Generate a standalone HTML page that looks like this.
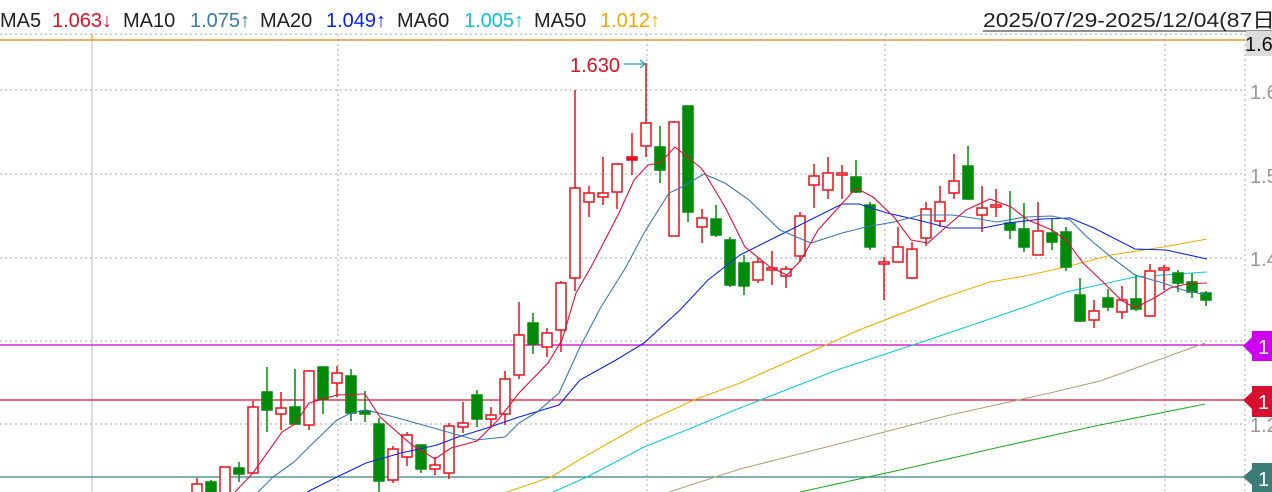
<!DOCTYPE html>
<html><head><meta charset="utf-8"><style>
html,body{margin:0;padding:0;background:#fff;width:1272px;height:492px;overflow:hidden}
svg{display:block;font-family:"Liberation Sans","Noto Sans CJK SC",sans-serif}
</style></head><body>
<svg width="1272" height="492" viewBox="0 0 1272 492" xmlns="http://www.w3.org/2000/svg">
<g font-size="20">
<text x="0" y="27" fill="#222">MA5</text><text x="52" y="27" fill="#e0102a">1.063↓</text>
<text x="123" y="27" fill="#222">MA10</text><text x="190" y="27" fill="#3a78b0">1.075↑</text>
<text x="260" y="27" fill="#222">MA20</text><text x="326" y="27" fill="#0a22ee">1.049↑</text>
<text x="397" y="27" fill="#222">MA60</text><text x="464" y="27" fill="#10c0d8">1.005↑</text>
<text x="534" y="27" fill="#222">MA50</text><text x="600" y="27" fill="#f0a800">1.012↑</text>
<text x="983" y="27" fill="#222" textLength="292" lengthAdjust="spacingAndGlyphs">2025/07/29-2025/12/04(87日</text>
</g>
<line x1="983" y1="31" x2="1272" y2="31" stroke="#222" stroke-width="1"/>
<g stroke="#aaa" stroke-width="1" stroke-dasharray="2,3">
<line x1="0" y1="34" x2="1245" y2="34"/>
<line x1="0" y1="90" x2="1245" y2="90"/><line x1="0" y1="174" x2="1245" y2="174"/>
<line x1="0" y1="258" x2="1245" y2="258"/><line x1="0" y1="341" x2="1245" y2="341"/>
<line x1="0" y1="424" x2="1245" y2="424"/>
<line x1="338" y1="34" x2="338" y2="492"/><line x1="647" y1="34" x2="647" y2="492"/>
<line x1="885" y1="34" x2="885" y2="492"/><line x1="1165" y1="34" x2="1165" y2="492"/>
<line x1="1245" y1="34" x2="1245" y2="492"/>
</g>
<line x1="92" y1="34" x2="92" y2="492" stroke="#bbb" stroke-width="1"/>
<line x1="92" y1="34" x2="92" y2="40" stroke="#f08000" stroke-width="1"/>
<line x1="0" y1="40" x2="1245" y2="40" stroke="#f08000" stroke-width="1.2"/>
<line x1="0" y1="345" x2="1245" y2="345" stroke="#cc00cc" stroke-width="1.2"/>
<line x1="0" y1="400" x2="1245" y2="400" stroke="#dd1035" stroke-width="1.2"/>
<line x1="0" y1="477" x2="1245" y2="477" stroke="#3c8080" stroke-width="1.2"/>
<g fill="none" stroke-width="1.1">
<polyline stroke="#22aa22" points="800,492 900,470 1000,447 1100,425 1205,404"/>
<polyline stroke="#b8a07a" points="669,492 740,469 850,441 950,415 1050,393 1100,381 1205,343"/>
<polyline stroke="#10c8e0" points="553,492 587,477 644,447 694,427 740,408 837,370 928,340 1025,307 1066,292 1135,277 1207,272"/>
<polyline stroke="#f0b000" points="507,492 551,477 584,457 644,423 694,400 740,383 837,340 859,330 939,299 990,282 1025,276 1066,267 1111,255 1163,247 1207,239"/>
</g>
<g stroke-width="1.5">
<g stroke="#e8101a" fill="#fff">
<line x1="197" y1="478" x2="197" y2="493"/><rect x="192" y="484" width="10" height="10"/>
<line x1="225" y1="467" x2="225" y2="493"/><rect x="220" y="467" width="10" height="27"/>
<line x1="253" y1="401" x2="253" y2="473"/><rect x="248" y="407" width="10" height="66"/>
<line x1="281" y1="392" x2="281" y2="430"/><rect x="276" y="408" width="10" height="6"/>
<line x1="309" y1="370" x2="309" y2="430"/><rect x="304" y="371" width="10" height="54"/>
<line x1="337" y1="366" x2="337" y2="397"/><rect x="332" y="373" width="10" height="10"/>
<line x1="393" y1="446" x2="393" y2="483"/><rect x="388" y="449" width="10" height="31"/>
<line x1="407" y1="432" x2="407" y2="466"/><rect x="402" y="435" width="10" height="22"/>
<line x1="435" y1="457" x2="435" y2="475"/><rect x="430" y="465" width="10" height="4"/>
<line x1="449" y1="423" x2="449" y2="479"/><rect x="444" y="426" width="10" height="47"/>
<line x1="463" y1="402" x2="463" y2="433"/><rect x="458" y="423" width="10" height="4"/>
<line x1="491" y1="407" x2="491" y2="428"/><rect x="486" y="415" width="10" height="4"/>
<line x1="505" y1="371" x2="505" y2="425"/><rect x="500" y="379" width="10" height="35"/>
<line x1="519" y1="302" x2="519" y2="379"/><rect x="514" y="335" width="10" height="40"/>
<line x1="547" y1="328" x2="547" y2="357"/><rect x="542" y="333" width="10" height="14"/>
<line x1="561" y1="281" x2="561" y2="352"/><rect x="556" y="283" width="10" height="47"/>
<line x1="575" y1="90" x2="575" y2="291"/><rect x="570" y="188" width="10" height="90"/>
<line x1="589" y1="186" x2="589" y2="217"/><rect x="584" y="193" width="10" height="9"/>
<line x1="603" y1="157" x2="603" y2="205"/><rect x="598" y="193" width="10" height="4"/>
<line x1="617" y1="163" x2="617" y2="209"/><rect x="612" y="164" width="10" height="28"/>
<line x1="632" y1="133" x2="632" y2="175"/><rect x="627" y="157" width="10" height="3" fill="#e8101a"/>
<line x1="646" y1="63" x2="646" y2="157"/><rect x="641" y="123" width="10" height="23"/>
<line x1="674" y1="121" x2="674" y2="236"/><rect x="669" y="122" width="10" height="114"/>
<line x1="702" y1="209" x2="702" y2="243"/><rect x="697" y="218" width="10" height="9"/>
<line x1="758" y1="258" x2="758" y2="283"/><rect x="753" y="262" width="10" height="18"/>
<line x1="772" y1="251" x2="772" y2="285"/><rect x="767" y="268" width="10" height="2"/>
<line x1="786" y1="266" x2="786" y2="288"/><rect x="781" y="269" width="10" height="7"/>
<line x1="800" y1="212" x2="800" y2="262"/><rect x="795" y="216" width="10" height="40"/>
<line x1="814" y1="164" x2="814" y2="208"/><rect x="809" y="176" width="10" height="9"/>
<line x1="828" y1="157" x2="828" y2="199"/><rect x="823" y="173" width="10" height="17"/>
<line x1="842" y1="165" x2="842" y2="199"/><rect x="837" y="173" width="10" height="2"/>
<line x1="884" y1="257" x2="884" y2="300"/><rect x="879" y="262" width="10" height="2"/>
<line x1="898" y1="227" x2="898" y2="262"/><rect x="893" y="247" width="10" height="15"/>
<line x1="912" y1="242" x2="912" y2="279"/><rect x="907" y="249" width="10" height="29"/>
<line x1="926" y1="202" x2="926" y2="246"/><rect x="921" y="209" width="10" height="29"/>
<line x1="940" y1="186" x2="940" y2="227"/><rect x="935" y="202" width="10" height="19"/>
<line x1="954" y1="154" x2="954" y2="199"/><rect x="949" y="181" width="10" height="12"/>
<line x1="982" y1="186" x2="982" y2="232"/><rect x="977" y="208" width="10" height="7"/>
<line x1="996" y1="189" x2="996" y2="217"/><rect x="991" y="205" width="10" height="2"/>
<line x1="1038" y1="202" x2="1038" y2="255"/><rect x="1033" y="231" width="10" height="24"/>
<line x1="1094" y1="300" x2="1094" y2="328"/><rect x="1089" y="311" width="10" height="9"/>
<line x1="1122" y1="286" x2="1122" y2="319"/><rect x="1117" y="300" width="10" height="12"/>
<line x1="1150" y1="264" x2="1150" y2="317"/><rect x="1145" y="271" width="10" height="45"/>
<line x1="1164" y1="265" x2="1164" y2="290"/><rect x="1159" y="268" width="10" height="2"/>
</g>
<g stroke="#008a0a" fill="#008a0a">
<line x1="211" y1="480" x2="211" y2="493"/><rect x="206" y="482" width="10" height="12"/>
<line x1="239" y1="462" x2="239" y2="482"/><rect x="234" y="468" width="10" height="6"/>
<line x1="267" y1="367" x2="267" y2="432"/><rect x="262" y="392" width="10" height="18"/>
<line x1="295" y1="369" x2="295" y2="424"/><rect x="290" y="407" width="10" height="17"/>
<line x1="323" y1="367" x2="323" y2="414"/><rect x="318" y="367" width="10" height="32"/>
<line x1="351" y1="369" x2="351" y2="421"/><rect x="346" y="376" width="10" height="37"/>
<line x1="365" y1="391" x2="365" y2="422"/><rect x="360" y="411" width="10" height="3"/>
<line x1="379" y1="418" x2="379" y2="492"/><rect x="374" y="424" width="10" height="57"/>
<line x1="421" y1="445" x2="421" y2="473"/><rect x="416" y="445" width="10" height="24"/>
<line x1="477" y1="390" x2="477" y2="427"/><rect x="472" y="395" width="10" height="24"/>
<line x1="533" y1="313" x2="533" y2="354"/><rect x="528" y="323" width="10" height="21"/>
<line x1="660" y1="126" x2="660" y2="183"/><rect x="655" y="147" width="10" height="23"/>
<line x1="688" y1="106" x2="688" y2="222"/><rect x="683" y="106" width="10" height="106"/>
<line x1="716" y1="205" x2="716" y2="237"/><rect x="711" y="219" width="10" height="16"/>
<line x1="730" y1="237" x2="730" y2="287"/><rect x="725" y="240" width="10" height="45"/>
<line x1="744" y1="255" x2="744" y2="295"/><rect x="739" y="263" width="10" height="23"/>
<line x1="856" y1="160" x2="856" y2="193"/><rect x="851" y="177" width="10" height="15"/>
<line x1="870" y1="202" x2="870" y2="250"/><rect x="865" y="205" width="10" height="42"/>
<line x1="968" y1="146" x2="968" y2="200"/><rect x="963" y="166" width="10" height="33"/>
<line x1="1010" y1="191" x2="1010" y2="239"/><rect x="1005" y="223" width="10" height="7"/>
<line x1="1024" y1="203" x2="1024" y2="252"/><rect x="1019" y="229" width="10" height="18"/>
<line x1="1052" y1="219" x2="1052" y2="250"/><rect x="1047" y="233" width="10" height="9"/>
<line x1="1066" y1="227" x2="1066" y2="271"/><rect x="1061" y="232" width="10" height="35"/>
<line x1="1080" y1="278" x2="1080" y2="322"/><rect x="1075" y="295" width="10" height="26"/>
<line x1="1108" y1="289" x2="1108" y2="311"/><rect x="1103" y="298" width="10" height="9"/>
<line x1="1136" y1="275" x2="1136" y2="311"/><rect x="1131" y="299" width="10" height="10"/>
<line x1="1178" y1="270" x2="1178" y2="292"/><rect x="1173" y="273" width="10" height="10"/>
<line x1="1192" y1="273" x2="1192" y2="298"/><rect x="1187" y="282" width="10" height="10"/>
<line x1="1206" y1="291" x2="1206" y2="306"/><rect x="1201" y="293" width="10" height="7"/>
</g>
</g>
<g fill="none" stroke-width="1.1">
<polyline stroke="#0a22ee" points="307,492 337,477 366,463 401,453 437,445 458,437 487,428 519,417 559,405 580,380 616,360 644,343 680,310 708,280 740,255 766,242 804,223 842,204 859,204 887,213 918,220 949,228 983,228 1008,223 1042,219 1070,218 1094,228 1135,249 1166,250 1207,259"/>
<polyline stroke="#3a78b0" points="258,492 273,477 294,462 309,447 337,420 351,413 366,410 394,417 430,427 451,433 476,440 505,437 519,423 537,412 559,393 580,347 601,307 626,267 644,233 669,193 680,188 704,174 725,183 749,200 780,230 811,243 842,233 866,227 894,222 921,215 952,215 973,218 997,222 1025,217 1052,216 1070,220 1087,237 1111,257 1135,275 1163,283 1183,290 1207,295"/>
<polyline stroke="#e0103a" points="235,492 253,473 282,432 295,424 309,403 337,395 365,394 380,417 412,445 435,459 451,448 477,441 498,420 519,393 548,363 562,340 576,293 591,267 619,213 634,180 648,165 660,163 675,147 701,168 704,172 725,207 745,247 770,267 787,275 801,260 818,230 839,207 856,188 873,197 894,217 911,240 928,243 946,227 966,210 990,199 1011,207 1028,220 1052,230 1066,240 1083,263 1104,283 1121,300 1135,308 1156,297 1170,288 1187,284 1207,283"/>
</g>
<text x="570" y="72" font-size="20" fill="#dd1020">1.630</text>
<line x1="624" y1="64" x2="645" y2="64" stroke="#2a9ac0" stroke-width="1.2"/>
<polyline points="640,60 645,64 640,68" fill="none" stroke="#2a9ac0" stroke-width="1.2"/>
<rect x="1246" y="31" width="26" height="25" fill="#dcdcdc"/>
<text x="1245" y="51" font-size="20" fill="#111">1.6</text>
<g font-size="20" fill="#999">
<text x="1250" y="99">1.6</text><text x="1250" y="183">1.5</text>
<text x="1250" y="266">1.4</text><text x="1250" y="432">1.2</text>
</g>
<polygon points="1243,346 1252,337 1252,331 1272,331 1272,361 1252,361 1252,355" fill="#cc00ee"/>
<text x="1258" y="354" font-size="20" fill="#fff">1</text>
<polygon points="1243,400 1252,392 1252,386 1272,386 1272,417 1252,417 1252,409" fill="#d81030"/>
<text x="1258" y="409" font-size="20" fill="#fff">1</text>
<polygon points="1243,477 1252,469 1252,463 1272,463 1272,492 1252,492 1252,485" fill="#3c7c78"/>
<text x="1258" y="486" font-size="20" fill="#fff">1</text>
</svg>
</body></html>
